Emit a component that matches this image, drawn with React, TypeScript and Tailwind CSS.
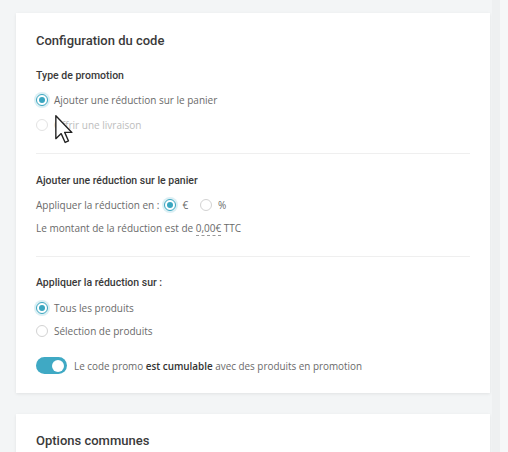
function Radio({ checked, disabled }: { checked?: boolean; disabled?: boolean }) {
  if (checked) {
    return (
      <span className="grid h-[12px] w-[12px] shrink-0 place-items-center rounded-full border border-[#3aa6c0] bg-white shadow-[0_0_0_2px_rgba(58,166,192,0.18)]">
        <span className="h-[6px] w-[6px] rounded-full bg-[#3aa6c0]" />
      </span>
    );
  }
  return (
    <span
      className={`h-[12px] w-[12px] shrink-0 rounded-full border bg-white ${disabled ? "border-[#e3e3e3]" : "border-[#d2d2d2]"}`}
    />
  );
}

function RadioRow({ label, checked, disabled }: { label: string; checked?: boolean; disabled?: boolean }) {
  return (
    <div className="flex h-4 items-center gap-[6px]">
      <Radio checked={checked} disabled={disabled} />
      <span className={disabled ? "text-[#bdbdbd]" : "text-[#6a6a6a]"}>{label}</span>
    </div>
  );
}

function Divider() {
  return <div className="h-px bg-[#efefef]" />;
}

const heading = "font-['Roboto',sans-serif] font-medium text-[#3a3a3a]";

export default function App() {
  return (
    <div
      className="relative h-[452px] w-[508px] overflow-hidden bg-[#f3f5f6] text-[10px] leading-4"
      style={{ fontFamily: '"Open Sans", "Noto Sans", sans-serif' }}
    >
      <div className="flex h-full">
        <div className="w-[492px] pl-4 pt-[13px]">
          <section className="w-[474px] bg-white px-5 pb-[19px] pt-5 shadow-[0_1px_3px_rgba(0,0,0,0.08)]">
            <h2 className={`${heading} text-[13px] leading-4`}>Configuration du code</h2>

            <h3 className={`${heading} mt-[19px] text-[10.5px]`}>Type de promotion</h3>
            <div className="mt-2 flex flex-col gap-[9px]">
              <RadioRow label="Ajouter une réduction sur le panier" checked />
              <RadioRow label="Offrir une livraison" disabled />
            </div>

            <div className="mt-5">
              <Divider />
            </div>

            <h3 className={`${heading} mt-[19px] text-[10.5px]`}>Ajouter une réduction sur le panier</h3>
            <div className="mt-2 flex h-4 items-center text-[#6a6a6a]">
              <span>Appliquer la réduction en :</span>
              <span className="ml-[5px] flex items-center gap-[6px]">
                <Radio checked />
                <span>€</span>
              </span>
              <span className="ml-[12px] flex items-center gap-[6px]">
                <Radio />
                <span>%</span>
              </span>
            </div>
            <div className="mt-[7px] text-[#6a6a6a]">
              Le montant de la réduction est de{" "}
              <span className="border-b border-dashed border-[#999]">0,00€</span> TTC
            </div>

            <div className="mt-5">
              <Divider />
            </div>

            <h3 className={`${heading} mt-[18px] text-[10.5px]`}>Appliquer la réduction sur :</h3>
            <div className="mt-[9px] flex flex-col gap-[7px]">
              <RadioRow label="Tous les produits" checked />
              <RadioRow label="Sélection de produits" />
            </div>

            <div className="mt-[18px] flex items-center gap-[7px]">
              <span className="flex h-[17px] w-[31px] shrink-0 items-center justify-end rounded-full bg-[#3fa9c4] pr-[3px]">
                <span className="h-[12px] w-[12px] rounded-full bg-white" />
              </span>
              <span className="text-[9.9px] text-[#6a6a6a]">
                Le code promo <b className="font-semibold text-[#333]">est cumulable</b> avec des produits en promotion
              </span>
            </div>
          </section>

          <section className="mt-[21px] h-[60px] w-[474px] bg-white px-5 pt-[19px] shadow-[0_1px_3px_rgba(0,0,0,0.08)]">
            <h2 className={`${heading} text-[13px] leading-4`}>Options communes</h2>
          </section>
        </div>
        <div className="w-[8px] bg-[#eef0f1]" />
        <div className="flex-1 bg-[#f6f7f8]" />
      </div>

      <svg className="absolute left-[55px] top-[115px]" width="20" height="29" viewBox="0 0 13 19">
        <path
          d="M0.5 0.5 L0.5 15.5 L4 12.2 L6.6 18 L8.8 17 L6.3 11.4 L11 11.4 Z"
          fill="#fff"
          stroke="#222"
          strokeWidth="0.9"
          strokeLinejoin="round"
        />
      </svg>
    </div>
  );
}
